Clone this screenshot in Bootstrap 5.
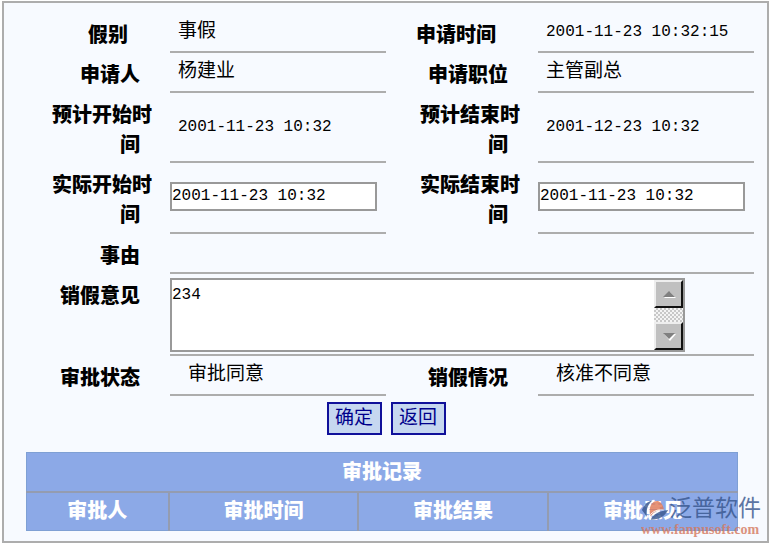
<!DOCTYPE html>
<html lang="zh-CN">
<head>
<meta charset="utf-8">
<meta name="viewport" content="width=device-width, initial-scale=1">
<title>销假审批</title>
<link href="https://cdn.jsdelivr.net/npm/bootstrap@5.3.0/dist/css/bootstrap.min.css" rel="stylesheet">
<style>
body { font-family: "Liberation Mono", "Noto Sans CJK SC", monospace; font-size: 16px; line-height: 30px; color: #000; background: #fff; }
.sheet { background: #f7faff; border: 2px solid #adadad; margin: 1px 2px 2px; padding: 10px 13px 10px 22px; }
.leave-form { display: grid; grid-template-columns: 144fr 216fr 152fr 216fr; }
.caption-cell { font-size: 20px; font-weight: 900; text-align: right; padding: 9px 18px 0 16px; }
.caption-cell.second { padding-left: 24px; }
.value-cell { display: flex; align-items: center; min-height: 40px; padding: 0 0 0 8px; border-bottom: 2px solid #adadad; }
.value-cell.field { padding: 0 0 2px; }
.value-cell.indent { padding-left: 18px; }
.tall { min-height: 70px; }
.tall.field { min-height: 71px; }
.wide { grid-column: span 3; }
.value-cell.zh { font-size: 19px; padding-bottom: 1px; }
.date-box { width: 96%; height: 29px; line-height: 24px; padding: 0 0 2px; border: 2px solid #999; border-radius: 0; background: #fff; color: #000; }
.memo { width: 515px; max-width: 100%; height: 74px; border: 2px solid #999; background: #fff; }
.memo textarea { border: 0; resize: none; overflow: hidden; padding: 0; line-height: 30px; outline: 0; background: #fff; color: #000; }
.scroller { width: 29px; background: repeating-conic-gradient(#c8c8c8 0 25%, #f4f4f4 0 50%) 0 0 / 4px 4px; }
.scroller button { height: 28px; padding: 0; line-height: 0; background: #c0c0c0; border: 2px solid; border-color: #eee #111 #111 #eee; }
.actions { gap: 9px; margin-top: 6px; }
.action { width: 55px; height: 33px; padding: 0; font-size: 19px; line-height: 24px; color: #00008b; background: #c6d7f0; border: 2px solid #10109a; border-radius: 0; }
.records { width: calc(100% - 16px); margin-top: 17px; table-layout: fixed; border: 1px solid #7fa0d4; background: #8ca9e7; color: #fff; font-size: 20px; }
.records th { height: 39px; padding: 4px 0 0; font-weight: 900; text-align: center; border: 2px solid #949cb0; }
.records tr:first-child th { border-top: 0; }
.records th:first-child { border-left: 0; }
.records th:last-child { border-right: 0; }
.records tr:last-child th { border-bottom: 0; }
.records .c1 { width: 20%; }
.watermark { right: 6px; bottom: 4px; opacity: .8; color: #36558d; }
.watermark .brand { font-size: 23px; line-height: 26px; }
.watermark .site { font: 700 14px/14px "Liberation Serif", serif; color: #d5795f; text-decoration: none; }
</style>
<script src="https://cdn.jsdelivr.net/npm/bootstrap@5.3.0/dist/js/bootstrap.bundle.min.js"></script>
</head>
<body>
<main class="sheet position-relative">
  <form>
    <div class="leave-form">
      <div class="caption-cell">假别&nbsp;&nbsp;</div>
      <div class="value-cell zh">事假</div>
      <div class="caption-cell second">申请时间&nbsp;&nbsp;</div>
      <div class="value-cell">2001-11-23 10:32:15</div>

      <div class="caption-cell">申请人&nbsp;</div>
      <div class="value-cell zh">杨建业</div>
      <div class="caption-cell second">申请职位&nbsp;</div>
      <div class="value-cell zh">主管副总</div>

      <div class="caption-cell">预计开始时间&nbsp;</div>
      <div class="value-cell tall">2001-11-23 10:32</div>
      <div class="caption-cell second">预计结束时间&nbsp;</div>
      <div class="value-cell tall">2001-12-23 10:32</div>

      <label class="caption-cell" for="start">实际开始时间&nbsp;</label>
      <div class="value-cell field tall"><input class="date-box" id="start" type="text" value="2001-11-23 10:32"></div>
      <label class="caption-cell second" for="end">实际结束时间&nbsp;</label>
      <div class="value-cell field tall"><input class="date-box" id="end" type="text" value="2001-11-23 10:32"></div>

      <div class="caption-cell">事由&nbsp;</div>
      <div class="value-cell wide"></div>

      <label class="caption-cell" for="opinion">销假意见&nbsp;</label>
      <div class="value-cell field wide pt-1">
        <div class="memo d-flex">
          <textarea class="flex-grow-1" id="opinion">234</textarea>
          <div class="scroller d-flex flex-column justify-content-between">
            <button type="button" aria-label="向上滚动"><svg width="14" height="9"><path d="M2 8h12L8 2z" fill="#fff"/><path d="M1 7h12L7 1z" fill="#808080"/></svg></button>
            <button type="button" aria-label="向下滚动"><svg width="14" height="9"><path d="M2 2h12L8 9z" fill="#fff"/><path d="M1 1h12L7 7z" fill="#808080"/></svg></button>
          </div>
        </div>
      </div>

      <div class="caption-cell">审批状态&nbsp;</div>
      <div class="value-cell indent zh">审批同意</div>
      <div class="caption-cell second">销假情况&nbsp;</div>
      <div class="value-cell indent zh">核准不同意</div>
    </div>
    <div class="actions d-flex justify-content-center pe-2">
      <button class="action" type="submit">确定</button>
      <button class="action" type="button">返回</button>
    </div>
  </form>

  <table class="records">
    <colgroup><col class="c1"><col><col><col></colgroup>
    <tr><th colspan="4">审批记录</th></tr>
    <tr><th>审批人</th><th>审批时间</th><th>审批结果</th><th>审批意见</th></tr>
  </table>

  <div class="watermark position-absolute">
    <div class="d-flex align-items-center">
      <svg width="28" height="26" viewBox="0 0 32 26" class="flex-shrink-0">
        <path d="M13 2C7 3 4 7 1 13l6 8C5 13 8 6 13 2z" fill="#36558d"/>
        <path d="M10 14C10 6 15 2 20 3c4 2 6 6 6 10-6-1-11 2-15 7-1-2-1-4-1-6z" fill="#e07855"/>
        <path d="M11 24c3-6 9-10 20-11-4 7-9 11-20 11z" fill="#36558d"/>
        <path d="M8 22c4-6 8-10 18-9" fill="none" stroke="#fff" stroke-width="1"/>
      </svg>
      <span class="brand text-nowrap">泛普软件</span>
    </div>
    <a class="site d-block" href="#">www.fanpusoft.com</a>
  </div>
</main>
</body>
</html>
